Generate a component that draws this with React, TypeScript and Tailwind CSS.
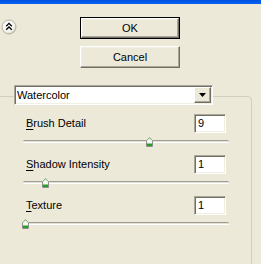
import React from 'react';

function CollapseIcon() {
  return (
    <svg width="16" height="16" viewBox="0 0 16 16">
      <defs>
        <radialGradient id="cg" cx="40%" cy="35%" r="70%">
          <stop offset="0" stopColor="#ffffff" />
          <stop offset="0.7" stopColor="#F4F3EE" />
          <stop offset="1" stopColor="#C9C7BA" />
        </radialGradient>
      </defs>
      <circle cx="8" cy="8" r="7" fill="url(#cg)" stroke="#B5B2A4" />
      <path d="M5.2 7.2 L8 4.4 L10.8 7.2 M5.2 10.8 L8 8 L10.8 10.8" fill="none" stroke="#000" strokeWidth="1.3" />
    </svg>
  );
}

function Thumb() {
  return (
    <svg width="7" height="10" viewBox="0 0 7 10">
      <path d="M0.5 3.5 L3.5 0.5 L6.5 3.5 V9.5 H0.5 Z" fill="#F7F7F2" stroke="#8E9090" />
      <path d="M1 3.6 L3.5 1.1 L6 3.6" fill="none" stroke="#9EE29E" />
      <rect x="1" y="6.5" width="5" height="2.5" fill="#21A121" />
    </svg>
  );
}

function Button({ label, isDefault }: { label: string; isDefault?: boolean }) {
  return (
    <div className={`w-[100px] h-[22px] ${isDefault ? 'border border-black' : ''}`}>
      <div className="w-full h-full flex items-center justify-center bg-[#ECE9D8] border border-t-white border-l-white border-b-[#716F64] border-r-[#716F64] shadow-[inset_-1px_-1px_0_#ACA899,inset_1px_1px_0_#F1EFE2] text-[11px] text-black">
        {label}
      </div>
    </div>
  );
}

function NumberBox({ value }: { value: string }) {
  return (
    <div className="w-[32px] h-[19px] bg-white border border-t-[#ACA899] border-l-[#ACA899] border-b-white border-r-white shadow-[inset_1px_1px_0_#716F64,inset_-1px_-1px_0_#F1EFE2] pl-[3px] text-[11px] leading-[17px] text-black">
      {value}
    </div>
  );
}

function Slider({ pos }: { pos: number }) {
  return (
    <div className="relative mt-[7px] h-[3px] rounded-full border-t border-t-[#9D9D92] border-b border-b-white bg-[#E3E1D4]">
      <div className="absolute top-[-4px]" style={{ left: pos }}>
        <Thumb />
      </div>
    </div>
  );
}

function Row({ u, rest, value, pos }: { u: string; rest: string; value: string; pos: number }) {
  return (
    <div>
      <div className="flex items-center justify-between pl-[3px] pr-[3px]">
        <span className="text-[11px] text-black">
          <span className="underline underline-offset-[2px]">{u}</span>
          {rest}
        </span>
        <NumberBox value={value} />
      </div>
      <Slider pos={pos} />
    </div>
  );
}

export default function App() {
  return (
    <div className="w-[261px] h-[264px] overflow-hidden bg-[#ECE9D8] font-['Liberation_Sans',Arial,sans-serif]">
      <div className="h-[4px] bg-gradient-to-b from-[#0050E0] to-[#0A62F2]" />

      <div className="flex items-start h-[92px] pt-[13px]">
        <div className="ml-[1px] mt-[2px]">
          <CollapseIcon />
        </div>
        <div className="ml-[63px] flex flex-col gap-[7px]">
          <Button label="OK" isDefault />
          <Button label="Cancel" />
        </div>
      </div>

      <div className="-ml-px w-[253px] h-[200px] border border-[#D0D0BF] rounded-tr-[4px]">
        <div className="-mt-[12px] ml-[14px] w-[199px] h-[20px] flex bg-white border border-t-[#ACA899] border-l-[#ACA899] border-b-white border-r-white shadow-[inset_1px_1px_0_#716F64,inset_-1px_-1px_0_#F1EFE2] p-[1px]">
          <div className="flex-1 pl-[1px] text-[11px] leading-[16px] text-black">Watercolor</div>
          <div className="w-[17px] h-full flex items-center justify-center bg-[#ECE9D8] border border-t-white border-l-white border-b-[#716F64] border-r-[#716F64] shadow-[inset_-1px_-1px_0_#ACA899]">
            <svg width="7" height="4" viewBox="0 0 7 4">
              <path d="M0 0 H7 L3.5 4 Z" fill="#000" />
            </svg>
          </div>
        </div>

        <div className="ml-[23px] w-[206px] mt-[9px] flex flex-col gap-[12px]">
          <Row u="B" rest="rush Detail" value="9" pos={123} />
          <Row u="S" rest="hadow Intensity" value="1" pos={19} />
          <Row u="T" rest="exture" value="1" pos={-1} />
        </div>
      </div>
    </div>
  );
}
